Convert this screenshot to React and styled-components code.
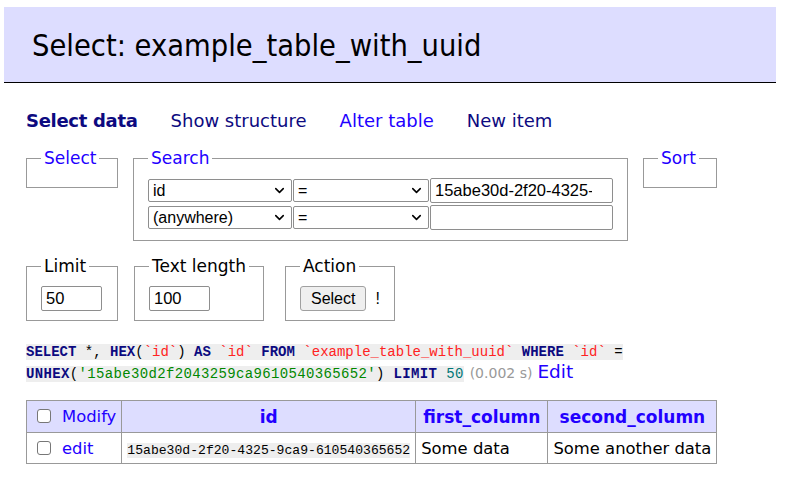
import React from "react";
import styled, { createGlobalStyle } from "styled-components";
import { ChevronDown } from "lucide-react";

const GlobalStyle = createGlobalStyle`
  body {
    margin: 0;
    background: #fff;
    font-family: "DejaVu Sans", Verdana, sans-serif;
    color: #000;
  }
`;

const Page = styled.div`
  width: 787px;
  padding-top: 7px;
`;

const Header = styled.h2`
  margin: 0 11px 0 4px;
  height: 76px;
  box-sizing: border-box;
  background: #ddf;
  border-bottom: 1px solid #000;
  padding: 2px 0 0 28px;
  display: flex;
  align-items: center;
  font-family: "DejaVu Sans Condensed", "DejaVu Sans", sans-serif;
  font-weight: normal;
  font-size: 30.5px;
  color: #000;
`;

const Content = styled.div`
  padding: 0 0 0 26px;
`;

const Nav = styled.nav`
  display: flex;
  gap: 33px;
  margin-top: 28px;
  font-size: 18px;
  line-height: 20px;
`;

const Link = styled.a`
  color: ${({ $visited }) => ($visited ? "#0d0a80" : "#2200ff")};
  font-weight: ${({ $bold }) => ($bold ? "bold" : "normal")};
  letter-spacing: ${({ $bold }) => ($bold ? "-0.3px" : "0")};
  text-decoration: none;
  cursor: pointer;
`;

const Row = styled.div`
  display: flex;
  align-items: flex-start;
  margin-top: ${({ $top }) => $top}px;
`;

const Fieldset = styled.fieldset`
  margin: 0 ${({ $gap }) => $gap ?? 15}px 0 0;
  padding: 10px 14px ${({ $pb }) => $pb ?? 9}px;
  border: 1px solid #999;
  min-width: ${({ $min }) => $min || 0}px;
  box-sizing: border-box;
`;

const Legend = styled.legend`
  padding: 0 3px;
  font-size: 17px;
  line-height: 20px;
  color: ${({ $link }) => ($link ? "#2200ff" : "#000")};
`;

const SearchGrid = styled.div`
  display: grid;
  grid-template-columns: 144px 136px 183px;
  column-gap: 1px;
  row-gap: 2px;
  align-items: center;
`;

const SelectWrap = styled.div`
  position: relative;
  width: ${({ $w }) => $w}px;
  height: 23px;
`;

const Select = styled.select`
  appearance: none;
  width: 100%;
  height: 100%;
  border: 1px solid #8e8e8e;
  border-radius: 2px;
  background: #fff;
  font-family: "Liberation Sans", Arial, sans-serif;
  font-size: 16px;
  padding: 0 4px;
  color: #000;
`;

const Chevron = styled(ChevronDown)`
  position: absolute;
  right: 5px;
  top: 4px;
  pointer-events: none;
`;

const Input = styled.input`
  width: ${({ $w }) => $w}px;
  height: 25px;
  box-sizing: border-box;
  border: 1px solid #8e8e8e;
  border-radius: 2px;
  font-family: "Liberation Sans", Arial, sans-serif;
  font-size: 16.5px;
  padding: 0 ${({ $pr }) => $pr || 4}px 0 4px;
  color: #000;
`;

const ActionRow = styled.div`
  display: flex;
  align-items: center;
  gap: 9px;
  font-family: "Liberation Sans", Arial, sans-serif;
  font-size: 16px;
`;

const Button = styled.button`
  height: 25px;
  padding: 0 10px;
  border: 1px solid #a0a0a0;
  border-radius: 3px;
  background: #efefef;
  font-family: "Liberation Sans", Arial, sans-serif;
  font-size: 16px;
  color: #000;
`;

const Sql = styled.div`
  margin-top: 20px;
  font-size: 14px;
  line-height: 20px;
`;

const Code = styled.code`
  font-family: "Liberation Mono", "DejaVu Sans Mono", monospace;
  font-size: 14px;
  background: #eee;
  color: #000;
  letter-spacing: ${({ $ls }) => $ls || 0}px;
`;

const Kw = styled.b`
  color: #0c0a80;
`;

const Str = styled.span`
  color: ${({ $c }) => $c};
`;

const Time = styled.span`
  color: #999;
  font-size: 14px;
  margin: 0 5px 0 6px;
`;

const EditLink = styled(Link)`
  font-size: 18.5px;
`;

const Table = styled.table`
  margin-top: 16px;
  border-collapse: collapse;
  font-size: 16.4px;
`;

const Th = styled.th`
  background: #ddf;
  border: 1px solid #999;
  height: 31px;
  padding: 0 ${({ $left }) => ($left ? 5 : 7)}px;
  color: #2200ff;
  font-size: ${({ $normal }) => ($normal ? "16.4px" : "17px")};
  text-align: ${({ $left }) => ($left ? "left" : "center")};
  font-weight: ${({ $normal }) => ($normal ? "normal" : "bold")};
  white-space: nowrap;
`;

const Td = styled.td`
  border: 1px solid #999;
  height: 30px;
  padding: 0 5px;
  white-space: nowrap;
`;

const IdCell = styled.code`
  font-family: "Liberation Mono", "DejaVu Sans Mono", monospace;
  font-size: 13.1px;
  background: #eee;
`;

const Check = styled.input.attrs({ type: "checkbox" })`
  appearance: none;
  width: 14px;
  height: 14px;
  margin: 0 11px 0 5px;
  border: 1px solid #777;
  border-radius: 3px;
  background: #fff;
  vertical-align: -1px;
`;

const SearchSelect = ({ w, value }) => (
  <SelectWrap $w={w}>
    <Select defaultValue={value}>
      <option>{value}</option>
    </Select>
    <Chevron size={15} strokeWidth={2.5} />
  </SelectWrap>
);

export default function App() {
  return (
    <Page>
      <GlobalStyle />
      <Header>Select: example_table_with_uuid</Header>
      <Content>
        <Nav>
          <Link $visited $bold>Select data</Link>
          <Link $visited>Show structure</Link>
          <Link>Alter table</Link>
          <Link $visited>New item</Link>
        </Nav>
        <Row $top={17}>
          <Fieldset $min={92}>
            <Legend $link>Select</Legend>
          </Fieldset>
          <Fieldset $pb={10}>
            <Legend $link>Search</Legend>
            <SearchGrid>
              <SearchSelect w={144} value="id" />
              <SearchSelect w={136} value="=" />
              <Input $w={183} $pr={20} defaultValue="15abe30d-2f20-4325-9ca9-610540365652" />
              <SearchSelect w={144} value="(anywhere)" />
              <SearchSelect w={136} value="=" />
              <Input $w={183} defaultValue="" />
            </SearchGrid>
          </Fieldset>
          <Fieldset $min={74}>
            <Legend $link>Sort</Legend>
          </Fieldset>
        </Row>
        <Row $top={15}>
          <Fieldset $min={92} $gap={16}>
            <Legend>Limit</Legend>
            <Input $w={61} defaultValue="50" />
          </Fieldset>
          <Fieldset $gap={21} $min={126}>
            <Legend>Text length</Legend>
            <Input $w={61} defaultValue="100" />
          </Fieldset>
          <Fieldset $min={108}>
            <Legend>Action</Legend>
            <ActionRow>
              <Button>Select</Button>
              <span>!</span>
            </ActionRow>
          </Fieldset>
        </Row>
        <Sql>
          <Code>
            <Kw>SELECT</Kw> *, <Kw>HEX</Kw>(<Str $c="#f22">`id`</Str>) <Kw>AS</Kw>{" "}
            <Str $c="#f22">`id`</Str> <Kw>FROM</Kw>{" "}
            <Str $c="#f22">`example_table_with_uuid`</Str> <Kw>WHERE</Kw>{" "}
            <Str $c="#f22">`id`</Str> =
          </Code>{" "}
          <br />
          <Code $ls={0.35}>
            <Kw>UNHEX</Kw>(<Str $c="#080">'15abe30d2f2043259ca9610540365652'</Str>){" "}
            <Kw>LIMIT</Kw> <Str $c="#077">50</Str>
          </Code>
          <Time>(0.002 s)</Time>
          <EditLink>Edit</EditLink>
        </Sql>
        <Table>
          <thead>
            <tr>
              <Th $left $normal>
                <Check />
                Modify
              </Th>
              <Th>id</Th>
              <Th>first_column</Th>
              <Th>second_column</Th>
            </tr>
          </thead>
          <tbody>
            <tr>
              <Td>
                <Check />
                <Link>edit</Link>
              </Td>
              <Td>
                <IdCell>15abe30d-2f20-4325-9ca9-610540365652</IdCell>
              </Td>
              <Td>Some data</Td>
              <Td>Some another data</Td>
            </tr>
          </tbody>
        </Table>
      </Content>
    </Page>
  );
}
